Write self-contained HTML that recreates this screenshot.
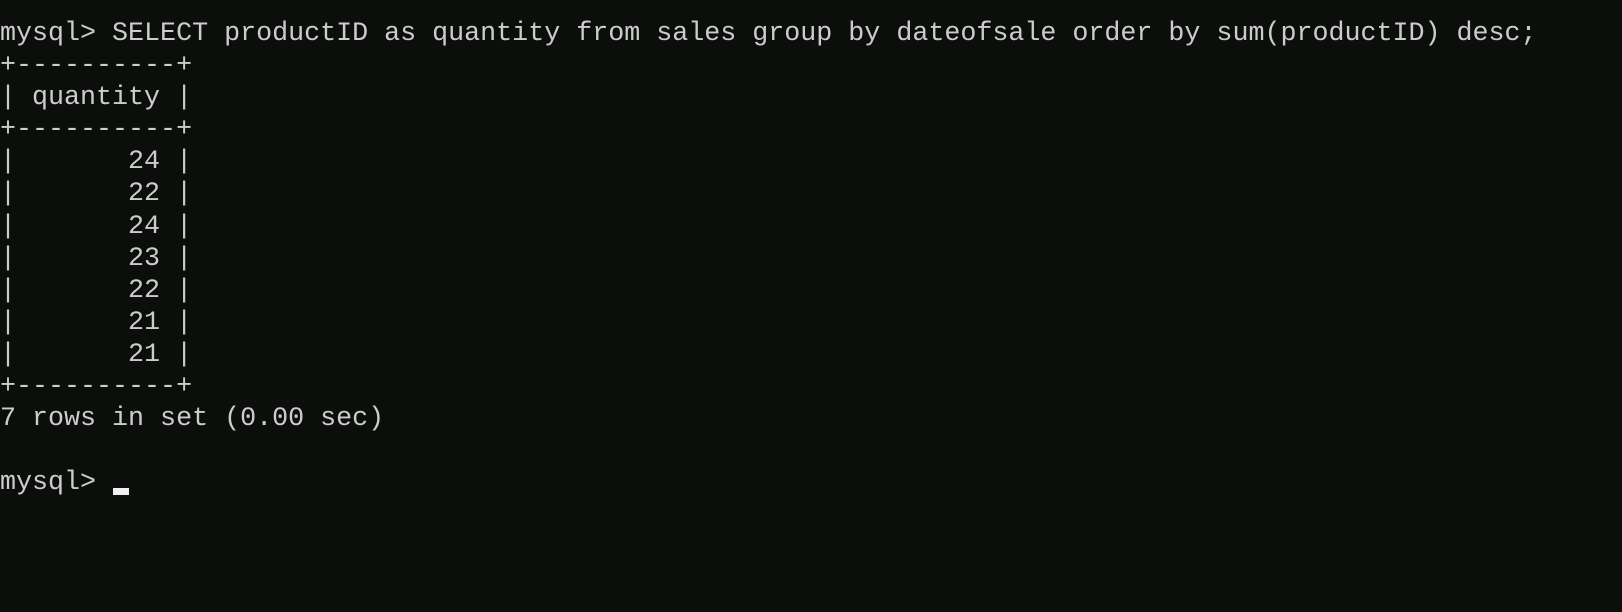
<!DOCTYPE html>
<html><head><style>
html,body{margin:0;padding:0;width:1622px;height:612px;background:#0c0e0c;overflow:hidden}
pre{position:absolute;left:0;top:18px;margin:0;font-family:"Liberation Mono",monospace;font-size:26.68px;line-height:32.1px;color:#cccccc;letter-spacing:0}
.cur{position:absolute;left:113px;top:488px;width:16px;height:7px;background:#f0f0f0}
</style></head><body>
<pre>mysql&gt; SELECT productID as quantity from sales group by dateofsale order by sum(productID) desc;
+----------+
| quantity |
+----------+
|       24 |
|       22 |
|       24 |
|       23 |
|       22 |
|       21 |
|       21 |
+----------+
7 rows in set (0.00 sec)

mysql&gt; </pre>
<div class="cur"></div>
</body></html>
